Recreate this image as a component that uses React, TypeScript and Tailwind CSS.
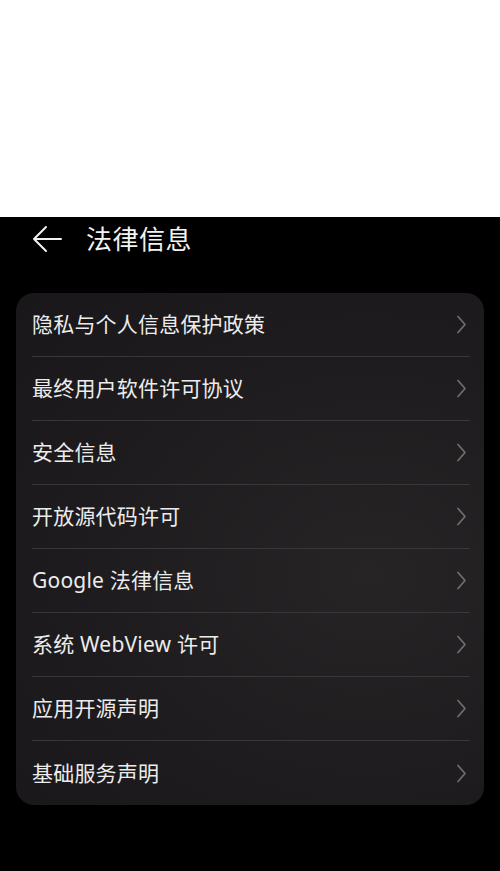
import React from 'react';

const items = [
  '隐私与个人信息保护政策',
  '最终用户软件许可协议',
  '安全信息',
  '开放源代码许可',
  'Google 法律信息',
  '系统 WebView 许可',
  '应用开源声明',
  '基础服务声明',
];

const font = '"Noto Sans", "Noto Sans CJK SC", sans-serif';

const Chevron = () => (
  <svg width="11" height="19" viewBox="0 0 11 19" fill="none" stroke="#6e6c6e" strokeWidth="1.8" strokeLinecap="round" strokeLinejoin="round">
    <path d="M2 1.5l7 8-7 8" />
  </svg>
);

const App: React.FC = () => {
  return (
    <div className="w-[500px] h-[871px] flex flex-col bg-black overflow-hidden" style={{ fontFamily: font }}>
      {/* top blank area */}
      <div className="h-[217px] bg-white shrink-0"></div>

      {/* Header */}
      <div className="h-[44px] flex items-center pl-[32px] gap-[24px] shrink-0">
        <svg width="30" height="28" viewBox="0 0 30 28" fill="none" stroke="#f2f2f2" strokeWidth="2" strokeLinecap="round" strokeLinejoin="round">
          <path d="M29 14H2M14 2L2 14l12 12" />
        </svg>
        <span className="text-[26px] leading-none text-[#f2f2f2] tracking-[0.5px]">法律信息</span>
      </div>

      {/* Card list */}
      <div className="mt-[32px] mx-[16px] rounded-[18px] bg-[radial-gradient(ellipse_at_75%_55%,#272426_0%,#1d1b1d_60%,#19171a_100%)] pl-[16px] pr-[14px]">
        {items.map((label, i) => (
          <div
            key={label}
            className={`h-[64px] flex items-center justify-between ${i < items.length - 1 ? 'border-b border-[#3a373a]' : ''}`}
          >
            <span className="text-[21px] leading-none text-[#ececec] tracking-[0.2px]">{label}</span>
            <span className="pr-[3px] flex items-center">
              <Chevron />
            </span>
          </div>
        ))}
      </div>
    </div>
  );
};

export default App;
